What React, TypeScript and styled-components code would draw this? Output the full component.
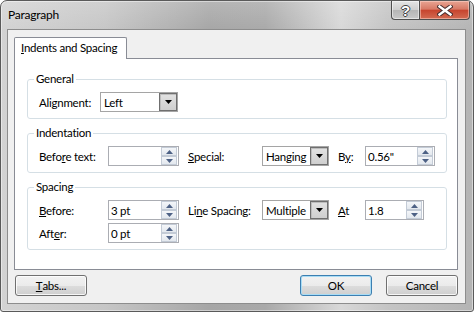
import styled, { createGlobalStyle } from "styled-components";

const GlobalStyle = createGlobalStyle`
  html, body {
    margin: 0;
    padding: 0;
    background: #ffffff;
  }
  body {
    font-family: Lato, "Noto Sans", sans-serif;
    font-size: 11.5px;
    letter-spacing: -0.25px;
    color: #000;
  }
  * {
    box-sizing: border-box;
  }
`;

function ArrowDown({ color = "#000" }: { color?: string }) {
  return (
    <svg width="7" height="4" viewBox="0 0 7 4">
      <path d="M0 0 H7 L3.5 4 Z" fill={color} />
    </svg>
  );
}

function ArrowUp({ color = "#000" }: { color?: string }) {
  return (
    <svg width="7" height="4" viewBox="0 0 7 4">
      <path d="M0 4 H7 L3.5 0 Z" fill={color} />
    </svg>
  );
}

function Combo({ value, width }: { value: string; width: number }) {
  return (
    <ComboBox $w={width}>
      <ComboText>{value}</ComboText>
      <ComboButton>
        <ArrowDown />
      </ComboButton>
    </ComboBox>
  );
}

function Spin({ value, width }: { value: string; width: number }) {
  return (
    <SpinBox $w={width}>
      <SpinText>{value}</SpinText>
      <SpinButtons>
        <SpinBtn>
          <ArrowUp color="#4d6185" />
        </SpinBtn>
        <SpinBtn>
          <ArrowDown color="#4d6185" />
        </SpinBtn>
      </SpinButtons>
    </SpinBox>
  );
}

export default function App() {
  return (
    <>
      <GlobalStyle />
      <Window>
        <TitleBar>
          <Title>Paragraph</Title>
          <CaptionButtons>
            <HelpButton>?</HelpButton>
            <CloseButton>
              <svg width="16" height="11" viewBox="0 0 16 11">
                <path
                  d="M2.5 1.5 L13.5 9.5 M13.5 1.5 L2.5 9.5"
                  stroke="#4a3030"
                  strokeWidth="4.4"
                  strokeLinecap="square"
                />
                <path
                  d="M2.5 1.5 L13.5 9.5 M13.5 1.5 L2.5 9.5"
                  stroke="#ffffff"
                  strokeWidth="2.4"
                  strokeLinecap="square"
                />
              </svg>
            </CloseButton>
          </CaptionButtons>
        </TitleBar>

        <Client>
          <TabStrip>
            <Tab>
              <u>I</u>ndents and Spacing
            </Tab>
          </TabStrip>
          <Panel>
            <Group>
              <Legend>General</Legend>
              <Row>
                <Label $w={61}>
                  Ali<u>g</u>nment:
                </Label>
                <Combo value="Left" width={78} />
              </Row>
            </Group>

            <Group>
              <Legend>Indentation</Legend>
              <Row>
                <Label $w={69}>
                  Befo<u>r</u>e text:
                </Label>
                <Spin value="" width={71} />
                <Label $w={74} $gap={9}>
                  <u>S</u>pecial:
                </Label>
                <Combo value="Hanging" width={67} />
                <Label $w={27} $gap={9}>
                  B<u>y</u>:
                </Label>
                <Spin value={'0.56"'} width={70} />
              </Row>
            </Group>

            <Group>
              <Legend>Spacing</Legend>
              <Row>
                <Label $w={69}>
                  <u>B</u>efore:
                </Label>
                <Spin value="3 pt" width={71} />
                <Label $w={74} $gap={9}>
                  Li<u>n</u>e Spacing:
                </Label>
                <Combo value="Multiple" width={67} />
                <Label $w={27} $gap={9}>
                  <u>A</u>t
                </Label>
                <Spin value="1.8" width={59} />
              </Row>
              <Row $tight>
                <Label $w={69}>
                  Aft<u>e</u>r:
                </Label>
                <Spin value="0 pt" width={71} />
              </Row>
            </Group>
          </Panel>

          <Footer>
            <DialogButton>
              <u>T</u>abs...
            </DialogButton>
            <Spacer />
            <DialogButton $default>OK</DialogButton>
            <DialogButton>Cancel</DialogButton>
          </Footer>
        </Client>
      </Window>
    </>
  );
}

const Window = styled.div`
  width: 474px;
  height: 312px;
  display: flex;
  flex-direction: column;
  border: 1px solid #5a5a5a;
  border-radius: 7px 7px 3px 3px;
  overflow: hidden;
  background:
    linear-gradient(
      180deg,
      rgba(255, 255, 255, 0.18) 0px,
      rgba(255, 255, 255, 0) 30px
    ),
    linear-gradient(
      90deg,
      #d3d3d3 0%,
      #c6c6c6 22%,
      #a6a6a6 44%,
      #a9a9a9 56%,
      #d8d8d8 72%,
      #c4c4c4 82%,
      #b4b4b4 100%
    );
  box-shadow: inset 0 0 0 1px rgba(255, 255, 255, 0.45);
`;

const TitleBar = styled.div`
  height: 28px;
  flex: none;
  display: flex;
  align-items: flex-start;
  padding-left: 7px;
`;

const Title = styled.div`
  margin-top: 6px;
  line-height: 16px;
  font-size: 12px;
  color: #000;
`;

const CaptionButtons = styled.div`
  margin-left: auto;
  margin-right: 3px;
  display: flex;
`;

const CaptionButton = styled.div`
  height: 19px;
  display: flex;
  align-items: center;
  justify-content: center;
  border: 1px solid #4f4f4f;
  border-top: none;
`;

const HelpButton = styled(CaptionButton)`
  width: 28px;
  border-right: none;
  border-radius: 0 0 0 4px;
  background: linear-gradient(
    180deg,
    #e4e4e4 0%,
    #cfcfcf 48%,
    #b6b6b6 52%,
    #c9c9c9 100%
  );
  box-shadow: inset 0 0 0 1px rgba(255, 255, 255, 0.5);
  font-family: "Liberation Sans", Arial, sans-serif;
  font-weight: bold;
  font-size: 15px;
  letter-spacing: 0;
  color: #ffffff;
  text-shadow:
    1px 0 0 #404040,
    -1px 0 0 #404040,
    0 1px 0 #404040,
    0 -1px 0 #404040;
`;

const CloseButton = styled(CaptionButton)`
  width: 51px;
  border-radius: 0 0 4px 0;
  background: linear-gradient(
    180deg,
    #e8a493 0%,
    #d77a66 45%,
    #c7452f 52%,
    #d36b52 100%
  );
  box-shadow: inset 0 0 0 1px rgba(255, 220, 210, 0.5);
`;

const Client = styled.div`
  flex: 1;
  display: flex;
  flex-direction: column;
  margin: 0 7px 7px 6px;
  padding: 7px 7px 7px 6px;
  background: #f0f0f0;
  border: 1px solid #8d8d8d;
`;

const TabStrip = styled.div`
  display: flex;
`;

const Tab = styled.div`
  position: relative;
  z-index: 1;
  width: 113px;
  height: 22px;
  margin-bottom: -1px;
  padding: 2px 0 0 6px;
  line-height: 16px;
  background: #ffffff;
  border: 1px solid #898c95;
  border-bottom: none;
  border-radius: 2px 2px 0 0;
  white-space: nowrap;
`;

const Panel = styled.div`
  flex: 1;
  display: flex;
  flex-direction: column;
  gap: 6px;
  padding: 12px 10px 0 12px;
  background: #ffffff;
  border: 1px solid #898c95;
`;

const Group = styled.fieldset`
  margin: 0;
  min-width: 0;
  padding: 0 6px 6px;
  border: 1px solid #d5dfe5;
  border-radius: 3px;
`;

const Legend = styled.legend`
  padding: 0 2px;
  line-height: 16px;
  color: #000;
`;

const Row = styled.div<{ $tight?: boolean }>`
  display: flex;
  align-items: center;
  height: 20px;
  margin-top: ${(p) => (p.$tight ? 3 : 5)}px;
  padding-left: 5px;
`;

const Label = styled.span<{ $w: number; $gap?: number }>`
  width: ${(p) => p.$w}px;
  margin-left: ${(p) => p.$gap ?? 0}px;
  flex: none;
  white-space: nowrap;
`;

const ComboBox = styled.div<{ $w: number }>`
  width: ${(p) => p.$w}px;
  height: 20px;
  flex: none;
  display: flex;
  align-items: center;
  background: #ffffff;
  border: 1px solid #a5a5a5;
`;

const ComboText = styled.span`
  flex: 1;
  padding-left: 3px;
  white-space: nowrap;
  overflow: hidden;
`;

const ComboButton = styled.div`
  width: 18px;
  height: 18px;
  flex: none;
  display: flex;
  align-items: center;
  justify-content: center;
  border: 1px solid #6f6f6f;
  background: linear-gradient(180deg, #e2e2e2 0%, #cfcfcf 100%);
  box-shadow: inset 1px 1px 0 #bdbdbd;
`;

const SpinBox = styled.div<{ $w: number }>`
  width: ${(p) => p.$w}px;
  height: 20px;
  flex: none;
  display: flex;
  align-items: center;
  background: #ffffff;
  border: 1px solid #abadb3;
`;

const SpinText = styled.span`
  flex: 1;
  padding-left: 2px;
  white-space: nowrap;
`;

const SpinButtons = styled.div`
  width: 16px;
  height: 18px;
  margin-right: 1px;
  display: flex;
  flex-direction: column;
`;

const SpinBtn = styled.div`
  flex: 1;
  display: flex;
  align-items: center;
  justify-content: center;
  border: 1px solid #c3cbd6;
  background: linear-gradient(180deg, #f4f6f9 0%, #e3e8ee 100%);
`;

const Footer = styled.div`
  display: flex;
  align-items: center;
  margin-top: 5px;
  gap: 13px;
`;

const Spacer = styled.div`
  flex: 1;
`;

const DialogButton = styled.div<{ $default?: boolean }>`
  width: 72px;
  height: 21px;
  display: flex;
  align-items: center;
  justify-content: center;
  margin-left: 1px;
  border: 1px solid ${(p) => (p.$default ? "#3c7fb1" : "#707070")};
  border-radius: 3px;
  background: linear-gradient(
    180deg,
    #f2f2f2 0%,
    #ebebeb 50%,
    #dddddd 51%,
    #cfcfcf 100%
  );
  box-shadow: inset 0 0 0 1px
    ${(p) => (p.$default ? "#a8dcf5" : "rgba(255, 255, 255, 0.8)")};
`;
